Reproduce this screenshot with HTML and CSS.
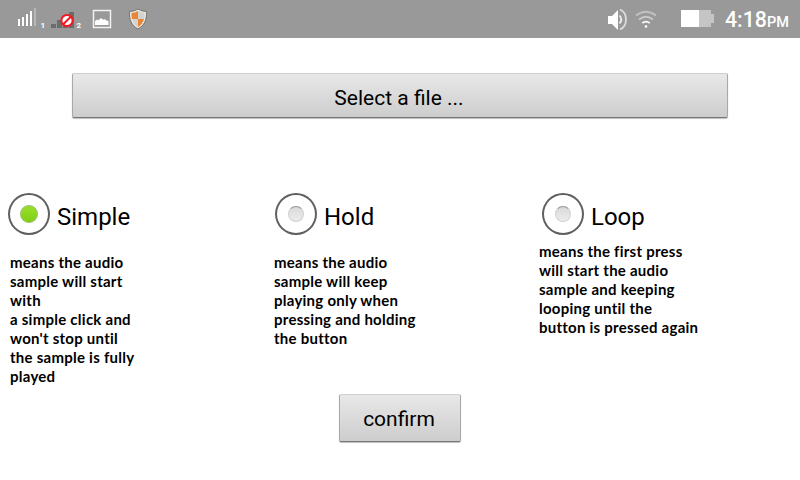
FILE: index.html
```html
<!DOCTYPE html>
<html lang="en">
<head>
<meta charset="utf-8">
<title>Select a file</title>
<link rel="stylesheet" href="styles.css">
</head>
<body>
<header class="status">
  <svg class="status-icons" width="160" height="38" viewBox="0 0 160 38">
    <g fill="#fff">
      <path d="M18 19h2v7h-2zM22 17h2v9h-2zM26 14h2v12h-2zM30 11h2v15h-2z"/>
      <path fill="#b8b8b8" d="M34 8h2v18h-2z"/>
    </g>
    <path fill="#6b6b6b" d="M51 24h5v4h-5zM57 20h5v8h-5zM63 16h5v12h-5zM69 12h5v16h-5z"/>
    <circle cx="67" cy="20.5" r="5.6" fill="#fff" stroke="#f51820" stroke-width="2"/>
    <path d="M63.2 16.700l7.600 7.600" transform="translate(134 0) scale(-1 1)" stroke="#f51820" stroke-width="2"/>
    <text class="sim" x="40.5" y="28">1</text>
    <text class="sim" x="76.5" y="28">2</text>
    <rect x="93.5" y="10.5" width="17" height="17" fill="none" stroke="#f2f2f2" stroke-width="1.5"/>
    <path fill="#fff" d="M95 25v-4l2-1.500 1.500.8 2.500-2.300 2 1.700 1.500-.7 2 1.500 2 .5v4z"/>
    <path fill="#e9e5df" stroke="#6f6c68" stroke-width=".9" d="M129.500 11.500Q134 11.500 138 9q4 2.500 8.500 2.500c.5 8-2 14-8.500 17.500-6.500-3.500-9-9.500-8.500-17.500z"/>
    <path fill="#e88638" d="M131.500 13q3.500-.2 6.500-2v8h-6q-.6-3-.5-6zM138 19h6q-1.300 5-6 8z"/>
    <path fill="#d2d2cf" d="M138 11q3 1.800 6.500 2 .1 3-.5 6h-6zM132 19h6v8q-4.700-3-6-8z"/>
  </svg>
  <svg class="status-icons" width="118" height="38" viewBox="0 0 118 38">
    <path fill="#fff" d="M8 16h4l6-6v20l-6-6H8z"/>
    <path d="M19.500 15.500q3.500 4 0 8" fill="none" stroke="#eee" stroke-width="1.800"/>
    <path d="M20 9.500c8 3.500 8 16.500 0 20" fill="none" stroke="#ddd" stroke-width="1.800"/>
    <g fill="none" stroke-width="1.800">
      <path stroke="#c0c0c0" d="M36 15.500q10-7.500 20 0"/>
      <path stroke="#c8c8c8" d="M39 19.500q7-5.500 14 0"/>
      <path stroke="#fff" d="M42.300 23q3.700-2.800 7.400 0"/>
    </g>
    <circle cx="46" cy="26.500" r="1.300" fill="#fff"/>
    <path fill="#c5c5c5" d="M99 10h12v4h3v9h-3v4H99z"/>
    <path fill="#fff" d="M81 10h18v17H81z"/>
  </svg>
  <div class="clock">4:18<span class="ampm">PM</span></div>
</header>
<main>
  <button class="btn file">Select a file ...</button>
  <section class="modes">
    <div class="mode">
      <div class="choice"><span class="radio on"></span><span class="name">Simple</span></div>
      <p class="note simple">means the audio<br>sample will start<br>with<br>a simple click and<br>won't stop until<br>the sample is fully<br>played</p>
    </div>
    <div class="mode">
      <div class="choice"><span class="radio"></span><span class="name">Hold</span></div>
      <p class="note hold">means the audio<br>sample will keep<br>playing only when<br>pressing and holding<br>the button</p>
    </div>
    <div class="mode">
      <div class="choice"><span class="radio"></span><span class="name">Loop</span></div>
      <p class="note loop">means the first press<br>will start the audio<br>sample and keeping<br>looping until the<br>button is pressed again</p>
    </div>
  </section>
  <button class="btn confirm">confirm</button>
</main>
</body>
</html>
```
FILE: styles.css
```css
* { box-sizing: border-box; }
body {
  margin: 0;
  width: 800px;
  height: 480px;
  overflow: hidden;
  background: #fff;
  color: #000;
  font-family: Roboto, sans-serif;
}
.status {
  display: flex;
  height: 38px;
  background: #999;
}
.status-icons { display: block; flex: none; }
.status-icons + .status-icons { margin-left: 440px; }
.sim { font: bold 8px Roboto, sans-serif; fill: #fff; }
.clock {
  margin-left: 7px;
  color: #fff;
  font-size: 21.3px;
  font-weight: 500;
  line-height: 40px;
  white-space: nowrap;
}
.ampm { font-size: 14.5px; }
main { display: flex; flex-direction: column; }
.btn {
  display: block;
  padding: 0;
  border: 1px solid;
  border-color: #cfcfcf #a8a8a8 #747474;
  border-radius: 2px;
  background: linear-gradient(#e8e8e8, #cdcdcd);
  box-shadow: 0 1px 1px rgba(0, 0, 0, .25);
  color: #000;
  font-family: Roboto, sans-serif;
}
.file {
  width: 656px;
  height: 45px;
  margin: 35px 0 0 72px;
  padding: 4px 2px 0 0;
  font-size: 21px;
}
.modes {
  display: grid;
  grid-template-columns: 267px 267px 266px;
  height: 202px;
  margin-top: 74px;
}
.choice { display: flex; height: 44px; padding-left: 7px; }
.radio {
  display: grid;
  place-items: center;
  width: 44px;
  height: 44px;
  border: 1px solid transparent;
  border-radius: 50%;
  box-shadow: inset 0 0 0 2px #606060;
  background-clip: padding-box;
}
.radio::before {
  content: "";
  width: 14px;
  height: 14px;
  border: 1px solid #d0d0d0;
  border-top-color: #929292;
  border-radius: 50%;
  background: linear-gradient(#dadada, #ececec);
}
.radio.on::before {
  width: 16px;
  height: 16px;
  border-color: #9bbd6b;
  background: linear-gradient(#98df2c, #80cf13);
}
.name { padding-left: 6px; font-size: 24px; line-height: 51px; }
.note {
  margin: 17px 0 0 10px;
  font: bold 15px/19px Lato, sans-serif;
  letter-spacing: .25px;
  white-space: nowrap;
}
.hold { margin-left: 7px; }
.loop { margin: 6px 0 0 5px; }
.confirm {
  width: 122px;
  height: 48px;
  margin: 0 0 0 339px;
  padding: 2px 2px 0 0;
  font-size: 21px;
}
```
